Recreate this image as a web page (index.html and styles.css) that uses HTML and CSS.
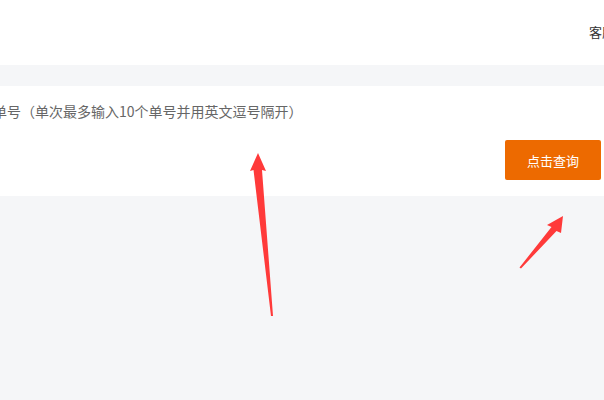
FILE: index.html
```html
<!DOCTYPE html>
<html lang="zh-CN">
<head>
    <meta charset="UTF-8">
    <meta name="viewport" content="width=device-width, initial-scale=1.0">
    <title>单号查询</title>
    <link rel="stylesheet" href="styles.css">
</head>
<body>
    <header class="top-bar">
        <nav class="top-nav">
            <a href="#">客服中心</a>
        </nav>
    </header>

    <main class="page">
        <div class="query-card">
            <textarea class="query-input" placeholder="请输入单号（单次最多输入10个单号并用英文逗号隔开）"></textarea>
            <div class="query-actions">
                <button class="query-btn">点击查询</button>
            </div>
        </div>
    </main>

    <svg class="marks" width="604" height="400" viewBox="0 0 604 400">
        <polygon points="258,153 266,171 262,170 273,316 271,316 253.5,170 250,171" fill="#ff3a3a"/>
        <polygon points="563,216 561,233 556.5,231 521,268.5 519.5,267.5 551.5,227 547,225" fill="#ff3a3a"/>
    </svg>
</body>
</html>
```

FILE: styles.css
```css
:root {
    --orange: #ed6a00;
    --bg: #f5f6f8;
    --text: #333;
    --muted: #666;
}

* {
    box-sizing: border-box;
    margin: 0;
    padding: 0;
    font-family: "Noto Sans CJK SC", "Noto Sans", sans-serif;
}

html, body {
    overflow: hidden;
}

body {
    background: var(--bg);
    min-height: 100vh;
    position: relative;
}

.top-bar {
    height: 65px;
    background: #fff;
    display: flex;
    justify-content: flex-end;
    align-items: center;
    padding-bottom: 5px;
}

.top-nav {
    margin-right: -37px;
    white-space: nowrap;
}

.top-nav a {
    color: var(--text);
    font-size: 13px;
    text-decoration: none;
}

.page {
    padding-top: 21px;
}

.query-card {
    background: #fff;
    padding: 14px 3px 16px 0;
}

.query-input {
    display: block;
    width: calc(100% + 49px);
    height: 40px;
    margin-left: -49px;
    border: none;
    outline: none;
    resize: none;
    font-size: 14px;
    line-height: 22px;
    color: var(--text);
    background: transparent;
}

.query-input::placeholder {
    color: var(--muted);
}

.query-actions {
    display: flex;
    justify-content: flex-end;
}

.query-btn {
    width: 96px;
    height: 40px;
    border: none;
    border-radius: 2px;
    background: var(--orange);
    color: #fff;
    font-size: 13px;
    cursor: pointer;
}

.marks {
    position: absolute;
    top: 0;
    left: 0;
    pointer-events: none;
}
```
